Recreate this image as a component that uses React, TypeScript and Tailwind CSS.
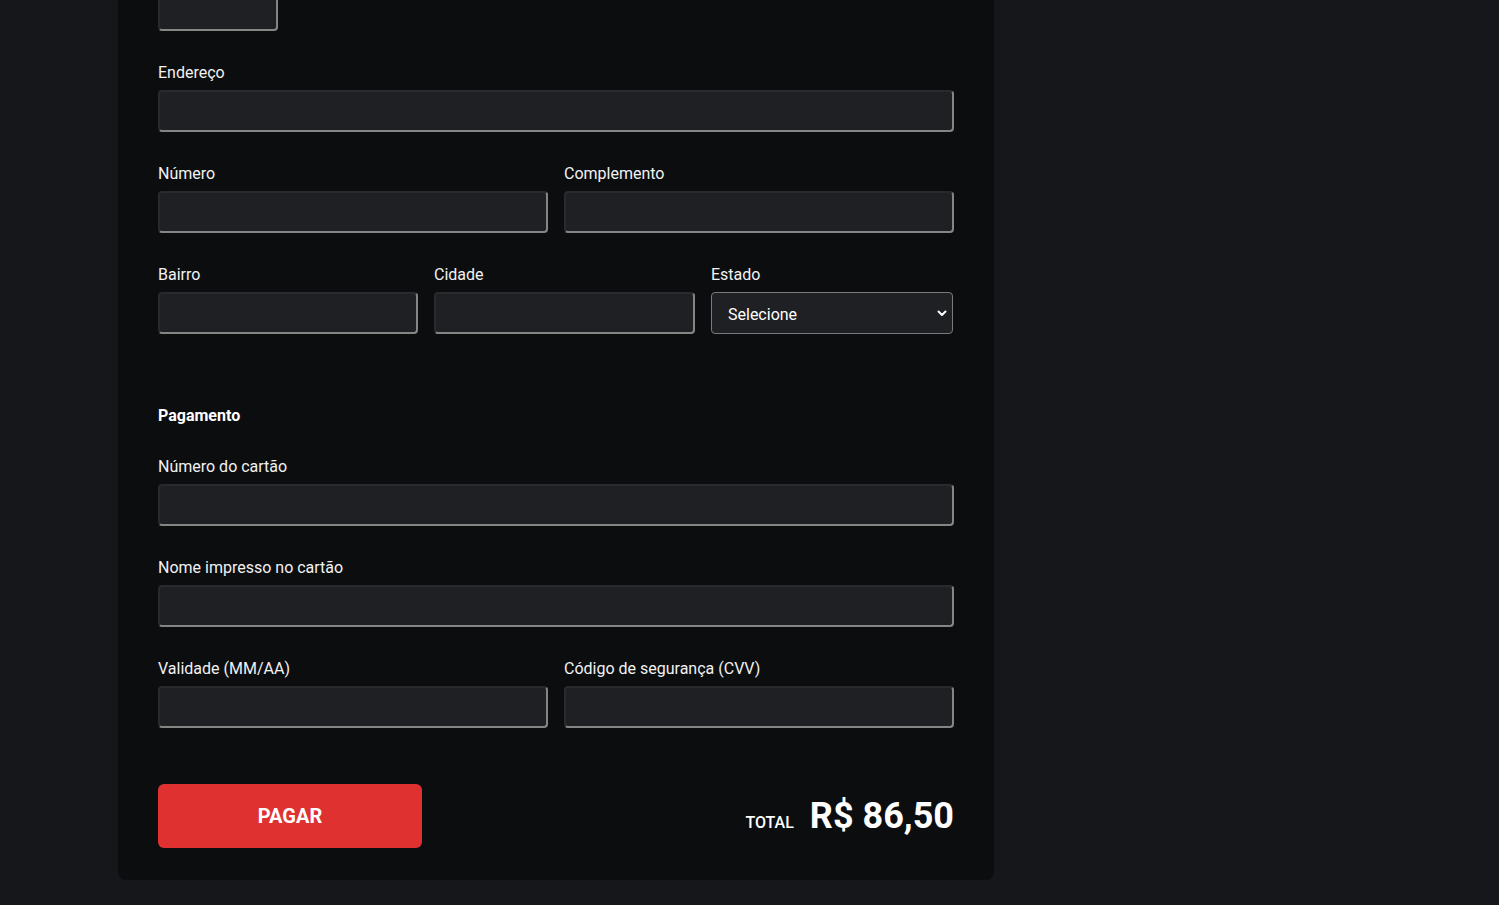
import React from 'react';

const inputCls =
  'block w-full h-[42px] rounded-[4px] bg-[#1f2023] border-2 border-t-[#292a2e] border-l-[#292a2e] border-r-[#858585] border-b-[#858585] px-3 text-white outline-none';

const labelCls = 'block text-[16px] leading-6 text-[#f2f2f2] pt-[1px] mb-[5px]';

const Field = ({ label, className = '' }: { label: string; className?: string }) => (
  <div className={className}>
    <label className={labelCls}>{label}</label>
    <input type="text" className={inputCls} />
  </div>
);

const App = () => {
  return (
    <div
      className="h-[905px] overflow-hidden bg-[#16171b] pl-[118px]"
      style={{ fontFamily: 'Roboto, "Liberation Sans", sans-serif' }}
    >
      <div className="w-[876px] bg-[#0c0d0f] rounded-b-lg px-10 pb-8">
        {/* previous row, scrolled past */}
        <div className="-mt-[11px]">
          <input type="text" className={`${inputCls} !w-[120px]`} />
        </div>

        <div className="mt-[29px] flex flex-col gap-[29px]">
          <Field label="Endereço" />

          <div className="grid grid-cols-2 gap-4">
            <Field label="Número" />
            <Field label="Complemento" />
          </div>

          <div className="grid grid-cols-[260px_261px_1fr] gap-4">
            <Field label="Bairro" />
            <Field label="Cidade" />
            <div className="pr-[1px]">
              <label className={labelCls}>Estado</label>
              <div className="relative">
                <select className="block w-full h-[42px] appearance-none rounded-[4px] bg-[#1f2023] border border-[#7a7a7a] pl-4 pr-8 pt-[3px] text-[16px] font-normal text-white outline-none">
                  <option>Selecione</option>
                </select>
                <svg
                  className="absolute right-[5px] top-1/2 -translate-y-1/2 pointer-events-none"
                  width="12"
                  height="12"
                  viewBox="0 0 12 12"
                  fill="none"
                >
                  <path d="M2.5 4.5L6 8L9.5 4.5" stroke="white" strokeWidth="2" strokeLinecap="round" strokeLinejoin="round" />
                </svg>
              </div>
            </div>
          </div>
        </div>

        <h3 className="mt-[69px] pt-[1px] text-[16px] leading-6 font-bold text-white">Pagamento</h3>

        <div className="mt-[26px] flex flex-col gap-[29px]">
          <Field label="Número do cartão" />
          <Field label="Nome impresso no cartão" />
          <div className="grid grid-cols-2 gap-4">
            <Field label="Validade (MM/AA)" />
            <Field label="Código de segurança (CVV)" />
          </div>
        </div>

        <div className="mt-[56px] flex items-center justify-between">
          <button className="w-[264px] h-[64px] rounded-md bg-[#e03131] text-white text-[20px] font-bold">
            PAGAR
          </button>
          <div className="flex items-baseline gap-4">
            <span className="text-[16px] font-medium text-white">TOTAL</span>
            <span className="text-[36px] font-bold text-white leading-none">R$ 86,50</span>
          </div>
        </div>
      </div>
    </div>
  );
};

export default App;
